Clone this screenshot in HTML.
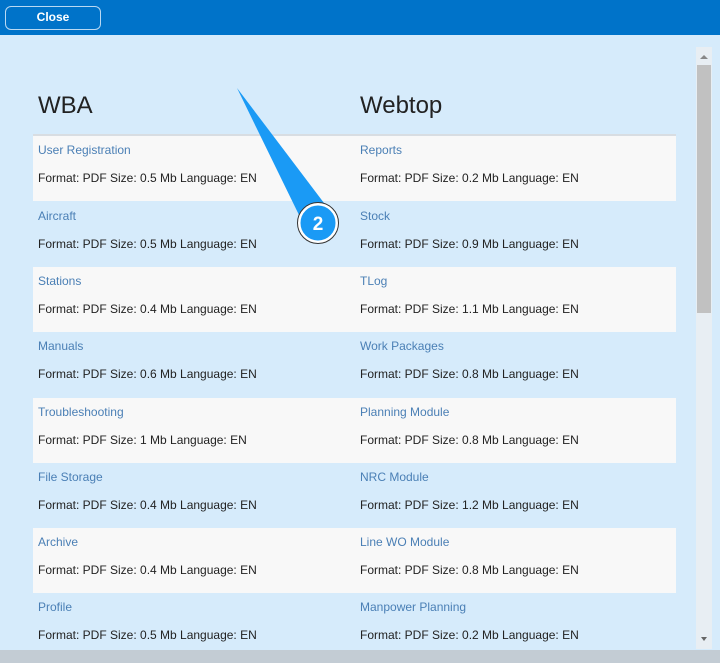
<!DOCTYPE html>
<html><head><style>
body{margin:0;width:720px;height:663px;overflow:hidden;background:#d6ebfb;font-family:"Liberation Sans",sans-serif;position:relative}
.top{position:absolute;left:0;top:0;width:720px;height:35px;background:#0073c9}
.btn{position:absolute;left:5px;top:6px;width:96px;height:24px;border:1px solid #b9d9f3;border-radius:6px;color:#fff;font-size:12px;font-weight:bold;text-align:center;line-height:21px;box-sizing:border-box}
h1{position:absolute;margin:0;font-weight:normal;font-size:24px;color:#222;top:92px}
.row{position:absolute;left:33px;width:643px;height:65px}
.row.w{background:#f8f8f8}
.row div{position:absolute;font-size:12px}
.t{color:#4a7fb5;top:7px}
.d{color:#222;top:35px}
.sb{position:absolute;left:696px;top:47px;width:16px;height:602px;background:#e8eef3}
.th{position:absolute;left:697px;top:65px;width:14px;height:248px;background:#c1c1c1}
.bot{position:absolute;left:0;top:650px;width:720px;height:13px;background:#c3ccd4}
</style></head><body>
<div class="top"><div class="btn">Close</div></div>
<h1 style="left:38px">WBA</h1><h1 style="left:360px">Webtop</h1>
<div style="position:absolute;left:33px;top:134px;width:643px;height:2px;background:#d8dde2"></div>
<div class="row w" style="top:136px"><div class="t" style="left:5px">User Registration</div><div class="d" style="left:5px">Format: PDF Size: 0.5 Mb Language: EN</div><div class="t" style="left:327px">Reports</div><div class="d" style="left:327px">Format: PDF Size: 0.2 Mb Language: EN</div></div>
<div class="row" style="top:202px"><div class="t" style="left:5px">Aircraft</div><div class="d" style="left:5px">Format: PDF Size: 0.5 Mb Language: EN</div><div class="t" style="left:327px">Stock</div><div class="d" style="left:327px">Format: PDF Size: 0.9 Mb Language: EN</div></div>
<div class="row w" style="top:267px"><div class="t" style="left:5px">Stations</div><div class="d" style="left:5px">Format: PDF Size: 0.4 Mb Language: EN</div><div class="t" style="left:327px">TLog</div><div class="d" style="left:327px">Format: PDF Size: 1.1 Mb Language: EN</div></div>
<div class="row" style="top:332px"><div class="t" style="left:5px">Manuals</div><div class="d" style="left:5px">Format: PDF Size: 0.6 Mb Language: EN</div><div class="t" style="left:327px">Work Packages</div><div class="d" style="left:327px">Format: PDF Size: 0.8 Mb Language: EN</div></div>
<div class="row w" style="top:398px"><div class="t" style="left:5px">Troubleshooting</div><div class="d" style="left:5px">Format: PDF Size: 1 Mb Language: EN</div><div class="t" style="left:327px">Planning Module</div><div class="d" style="left:327px">Format: PDF Size: 0.8 Mb Language: EN</div></div>
<div class="row" style="top:463px"><div class="t" style="left:5px">File Storage</div><div class="d" style="left:5px">Format: PDF Size: 0.4 Mb Language: EN</div><div class="t" style="left:327px">NRC Module</div><div class="d" style="left:327px">Format: PDF Size: 1.2 Mb Language: EN</div></div>
<div class="row w" style="top:528px"><div class="t" style="left:5px">Archive</div><div class="d" style="left:5px">Format: PDF Size: 0.4 Mb Language: EN</div><div class="t" style="left:327px">Line WO Module</div><div class="d" style="left:327px">Format: PDF Size: 0.8 Mb Language: EN</div></div>
<div class="row" style="top:593px"><div class="t" style="left:5px">Profile</div><div class="d" style="left:5px">Format: PDF Size: 0.5 Mb Language: EN</div><div class="t" style="left:327px">Manpower Planning</div><div class="d" style="left:327px">Format: PDF Size: 0.2 Mb Language: EN</div></div>
<div class="sb"></div><div class="th"></div>
<svg style="position:absolute;left:0;top:0" width="720" height="663">
<path d="M700 59 L704 55 L708 59Z" fill="#888"/>
<path d="M701 637 L707 637 L704 641Z" fill="#666"/>
<path d="M237 88 L324 203 L299 215Z" fill="#1a9af5"/>
<circle cx="318" cy="223" r="19" fill="#1a9af5" stroke="#fff" stroke-width="3"/>
<circle cx="318" cy="223" r="20.5" fill="none" stroke="#333" stroke-width="1"/>
<text x="318" y="230" text-anchor="middle" font-family="Liberation Sans" font-weight="bold" font-size="19" fill="#fff">2</text>
</svg>
<div class="bot"></div>
</body></html>
